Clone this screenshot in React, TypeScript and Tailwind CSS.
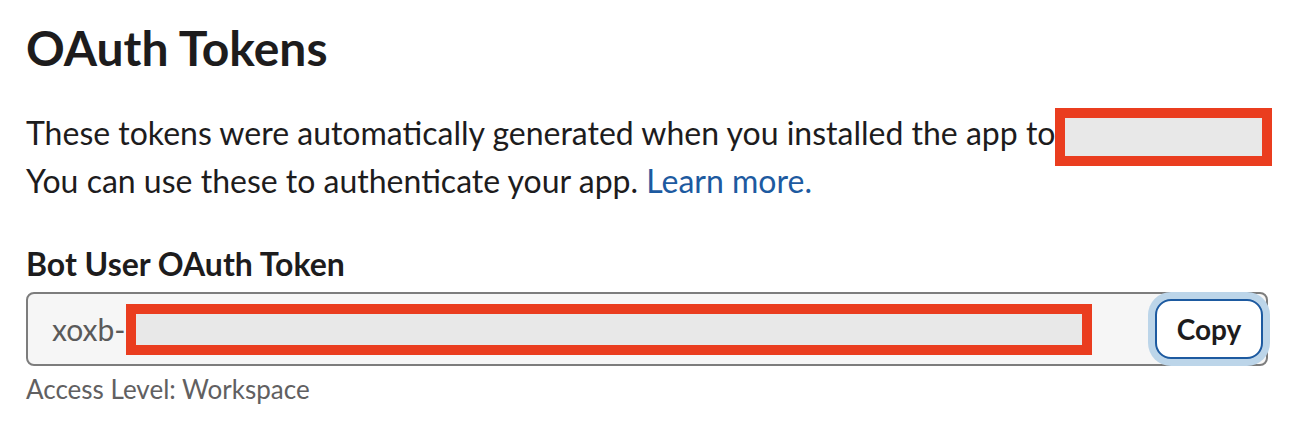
import React from "react";

export default function App() {
  return (
    <div className="bg-white h-[422px] w-[1292px] px-[26px] pt-[22px] text-[#1d1c1d] font-['Lato','Liberation_Sans',sans-serif]">
      <h1 className="text-[48px] font-bold leading-[52px]">OAuth Tokens</h1>

      <p className="mt-[35px] text-[32px] leading-[48px] whitespace-nowrap">
        These tokens were automatically generated when you installed the app to
        <span className="inline-block align-middle -my-[10px] w-[217px] h-[58px] border-[10px] border-[#ea3d1f] bg-[#e8e8e8]" />
        <br />
        You can use these to authenticate your app.{" "}
        <a href="#" className="text-[#1d5aa0]">
          Learn more.
        </a>
      </p>

      <h2 className="mt-[41px] text-[32px] font-bold leading-[36px]">Bot User OAuth Token</h2>

      <div className="mt-[10px] flex items-center w-[1242px] h-[74px] rounded-[8px] border-2 border-[#7d7d7d] bg-[#f6f6f6] pl-[24px] pr-[3px]">
        <span className="text-[30px] text-[#5a5a5a]">xoxb-</span>
        <span className="w-[966px] h-[51px] border-[10px] border-[#ea3d1f] bg-[#e8e8e8]" />
        <button className="ml-auto h-[60px] w-[108px] rounded-[16px] border-2 border-[#1d5aa0] bg-white text-[28px] font-bold text-[#1d1c1d] shadow-[0_0_0_7px_#bcd5e9]">
          Copy
        </button>
      </div>

      <p className="mt-[7px] text-[26px] leading-[32px] text-[#616061]">Access Level: Workspace</p>
    </div>
  );
}
